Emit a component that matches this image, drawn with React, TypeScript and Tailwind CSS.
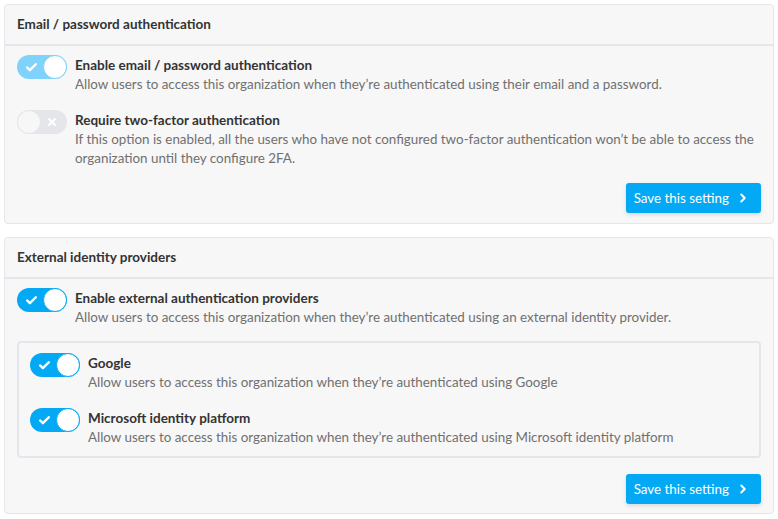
import { Check, X, ChevronRight } from 'lucide-react'

const font = { fontFamily: '"Source Sans Pro", Lato, "Liberation Sans", sans-serif' }

function Toggle({ on, faded }: { on: boolean; faded?: boolean }) {
  if (!on) {
    return (
      <div className="relative w-[50px] h-[24px] shrink-0 rounded-full bg-[#e4e6e9]">
        <div className="absolute left-0 top-0 w-[24px] h-[24px] rounded-full bg-[#f7f7f7] border border-[#e4e6e9]" />
        <X className="absolute right-[9px] top-[6px] w-[12px] h-[12px] text-white" strokeWidth={4} />
      </div>
    )
  }
  return (
    <div className={`relative w-[50px] h-[24px] shrink-0 rounded-full ${faded ? 'bg-[#7fd3fa]' : 'bg-[#03a9f4]'}`}>
      <Check className="absolute left-[8px] top-[6px] w-[13px] h-[13px] text-white" strokeWidth={4.5} />
      <div className={`absolute right-0 top-0 w-[24px] h-[24px] rounded-full bg-white border ${faded ? 'border-[#7fd3fa]' : 'border-[#03a9f4]'}`} />
    </div>
  )
}

function Option({ on, faded, title, desc }: { on: boolean; faded?: boolean; title: string; desc: string }) {
  return (
    <div className="flex gap-2">
      <Toggle on={on} faded={faded} />
      <div className="pt-[1px]">
        <div className="text-[13.5px] leading-[19px] font-bold text-[#333]">{title}</div>
        <div className="text-[13.4px] leading-[19px] text-[#707070]">{desc}</div>
      </div>
    </div>
  )
}

function SaveButton() {
  return (
    <div className="flex justify-end">
      <button className="flex items-center gap-[7px] h-[30px] pl-[8px] pr-[11px] rounded-[3px] bg-[#03a9f4] text-white text-[13.4px] shadow-[0_2px_4px_rgba(0,0,0,0.12)]">
        Save this setting
        <ChevronRight className="w-[14px] h-[14px]" strokeWidth={3.5} />
      </button>
    </div>
  )
}

export default function App() {
  return (
    <div className="bg-white p-[4px] flex flex-col gap-[13px] w-[778px]" style={font}>
      <section className="border border-[#e3e6ea] rounded-[4px] bg-[#f7f7f7]">
        <div className="h-[41px] px-[12px] flex items-center border-b-2 border-[#e3e6ea] text-[13.5px] font-bold text-[#333]">
          Email / password authentication
        </div>
        <div className="px-[12px] pt-[9px] pb-[10px] flex flex-col gap-[16px]">
          <Option on faded title="Enable email / password authentication" desc="Allow users to access this organization when they’re authenticated using their email and a password." />
          <Option
            on={false}
            title="Require two-factor authentication"
            desc="If this option is enabled, all the users who have not configured two-factor authentication won’t be able to access the organization until they configure 2FA."
          />
          <div className="-mt-[1px]">
            <SaveButton />
          </div>
        </div>
      </section>
      <section className="border border-[#e3e6ea] rounded-[4px] bg-[#f7f7f7]">
        <div className="h-[41px] px-[12px] flex items-center border-b-2 border-[#e3e6ea] text-[13.5px] font-bold text-[#333]">
          External identity providers
        </div>
        <div className="px-[12px] pt-[9px] pb-[9px] flex flex-col gap-[16px]">
          <Option on title="Enable external authentication providers" desc="Allow users to access this organization when they’re authenticated using an external identity provider." />
          <div className="border-2 border-[#e3e6ea] rounded-[4px] px-[11px] pt-[10px] pb-[9px] flex flex-col gap-[16px] -mt-[2px]">
            <Option on title="Google" desc="Allow users to access this organization when they’re authenticated using Google" />
            <Option on title="Microsoft identity platform" desc="Allow users to access this organization when they’re authenticated using Microsoft identity platform" />
          </div>
          <SaveButton />
        </div>
      </section>
    </div>
  )
}
